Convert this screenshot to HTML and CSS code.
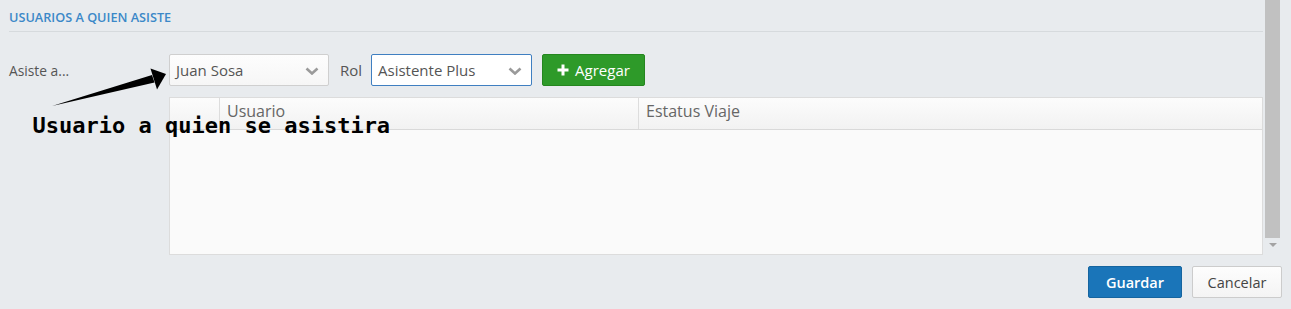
FILE: index.html
```html
<!DOCTYPE html>
<html lang="es">
<head>
<meta charset="utf-8">
<title>Usuarios a quien asiste</title>
<link rel="stylesheet" href="styles.css">
</head>
<body>
<div class="page">
  <div class="scroll-area">
    <div class="main">
      <div class="section-title">USUARIOS A QUIEN ASISTE</div>
      <div class="form-row">
        <label class="field-label">Asiste a...</label>
        <div class="select">
          <span>Juan Sosa</span>
          <svg class="chev" width="14" height="8" viewBox="0 0 14 8"><path d="M1.5 1.5 L7 6.5 L12.5 1.5" fill="none" stroke="#9a9a9a" stroke-width="2.6"/></svg>
        </div>
        <label class="rol-label">Rol</label>
        <div class="select select-focus">
          <span>Asistente Plus</span>
          <svg class="chev" width="14" height="8" viewBox="0 0 14 8"><path d="M1.5 1.5 L7 6.5 L12.5 1.5" fill="none" stroke="#9a9a9a" stroke-width="2.6"/></svg>
        </div>
        <button class="btn btn-green">
          <svg width="12" height="12" viewBox="0 0 12 12"><path d="M6 0.5 V11.5 M0.5 6 H11.5" stroke="#fff" stroke-width="3"/></svg>
          <span>Agregar</span>
        </button>
      </div>
      <div class="table">
        <div class="thead">
          <div class="th th-check"></div>
          <div class="th th-user">Usuario</div>
          <div class="th th-status">Estatus Viaje</div>
        </div>
        <div class="tbody"></div>
      </div>
    </div>
    <div class="scrollbar">
      <div class="thumb"></div>
      <div class="arrow"></div>
    </div>
  </div>
  <div class="footer">
    <button class="btn btn-blue">Guardar</button>
    <button class="btn btn-default">Cancelar</button>
  </div>
</div>

<svg class="annot-arrow" width="200" height="120" viewBox="0 0 200 120">
  <polygon points="52,106 152,75 154.5,82.5" fill="#000"/>
  <polygon points="150.5,68.5 166,74 157,89.5" fill="#000"/>
</svg>
<div class="annot-text">Usuario a quien se asistira</div>
</body>
</html>
```

FILE: styles.css
```css
html, body {
  margin: 0;
  padding: 0;
}
body {
  background: #e8ebee;
  font-family: "Open Sans", "Liberation Sans", sans-serif;
  color: #555;
  width: 1291px;
  height: 309px;
  overflow: hidden;
  position: relative;
}
.page {
  padding: 0 9px 0 9px;
}
.scroll-area {
  display: flex;
  height: 255px;
}
.main {
  flex: 1;
  display: flex;
  flex-direction: column;
}
.section-title {
  font-size: 12.7px;
  font-weight: 600;
  color: #3b88c8;
  line-height: 16px;
  padding-top: 9px;
  padding-bottom: 6px;
  border-bottom: 1px solid #d6dadd;
}
.form-row {
  display: flex;
  align-items: center;
  margin-top: 22px;
  height: 32px;
}
.field-label {
  width: 160px;
  font-size: 13.8px;
  color: #555;
}
.select {
  box-sizing: border-box;
  width: 160px;
  height: 32px;
  border: 1px solid #cfcfcf;
  border-radius: 2px;
  background: linear-gradient(#fdfdfd, #f6f6f6);
  display: flex;
  align-items: center;
  justify-content: space-between;
  padding: 0 9px 0 6px;
  font-size: 15px;
  color: #555;
}
.select-focus {
  width: 161px;
  border: 1px solid #3f7fc1;
  background: #fff;
}
.chev {
  display: block;
  margin-top: 1px;
}
.rol-label {
  font-size: 15px;
  color: #555;
  margin-left: 11px;
  width: 31px;
}
.btn {
  box-sizing: border-box;
  height: 32px;
  font-family: "Open Sans", "Liberation Sans", sans-serif;
  font-size: 15px;
  border-radius: 2px;
  display: inline-flex;
  align-items: center;
  justify-content: center;
  padding: 0;
  cursor: pointer;
}
.btn-green {
  margin-left: 10px;
  width: 103px;
  background: #2e9a29;
  border: 1px solid #25861f;
  color: #fff;
  gap: 6px;
}
.table {
  margin-top: 11px;
  margin-left: 160px;
  height: 158px;
  box-sizing: border-box;
  border: 1px solid #dcdcdc;
  background: #fafafa;
  display: flex;
  flex-direction: column;
}
.thead {
  display: flex;
  height: 31px;
  border-bottom: 1px solid #d9d9d9;
  background: linear-gradient(#fcfcfc, #f2f2f2);
}
.th {
  box-sizing: border-box;
  font-size: 16px;
  color: #666;
  line-height: 27px;
  padding-left: 7px;
}
.th-check {
  width: 50px;
  border-right: 1px solid #dddddd;
}
.th-user {
  width: 419px;
  border-right: 1px solid #dddddd;
}
.th-status {
  flex: 1;
}
.tbody {
  flex: 1;
}
.scrollbar {
  width: 19px;
  display: flex;
  flex-direction: column;
  align-items: flex-end;
}
.thumb {
  width: 15px;
  margin-right: 2px;
  height: 238px;
  background: #c1c1c1;
}
.arrow {
  width: 0;
  height: 0;
  margin-top: 5px;
  margin-right: 5px;
  border-left: 4px solid transparent;
  border-right: 4px solid transparent;
  border-top: 4px solid #a3a3a3;
}
.footer {
  display: flex;
  justify-content: flex-end;
  gap: 10px;
  padding-top: 11px;
}
.btn-blue {
  width: 94px;
  background: #1a75b9;
  border: 1px solid #15649f;
  color: #fff;
  font-weight: 600;
  font-size: 14.5px;
}
.btn-default {
  width: 90px;
  background: linear-gradient(#fdfdfd, #f4f4f4);
  border: 1px solid #cccccc;
  color: #444;
  font-size: 14.5px;
}
.annot-arrow {
  position: absolute;
  left: 0;
  top: 0;
}
.annot-text {
  position: absolute;
  left: 32.5px;
  top: 114.5px;
  font-family: "DejaVu Sans Mono", "Liberation Mono", monospace;
  font-weight: bold;
  font-size: 22px;
  line-height: 22px;
  color: #000;
  white-space: nowrap;
}
```
